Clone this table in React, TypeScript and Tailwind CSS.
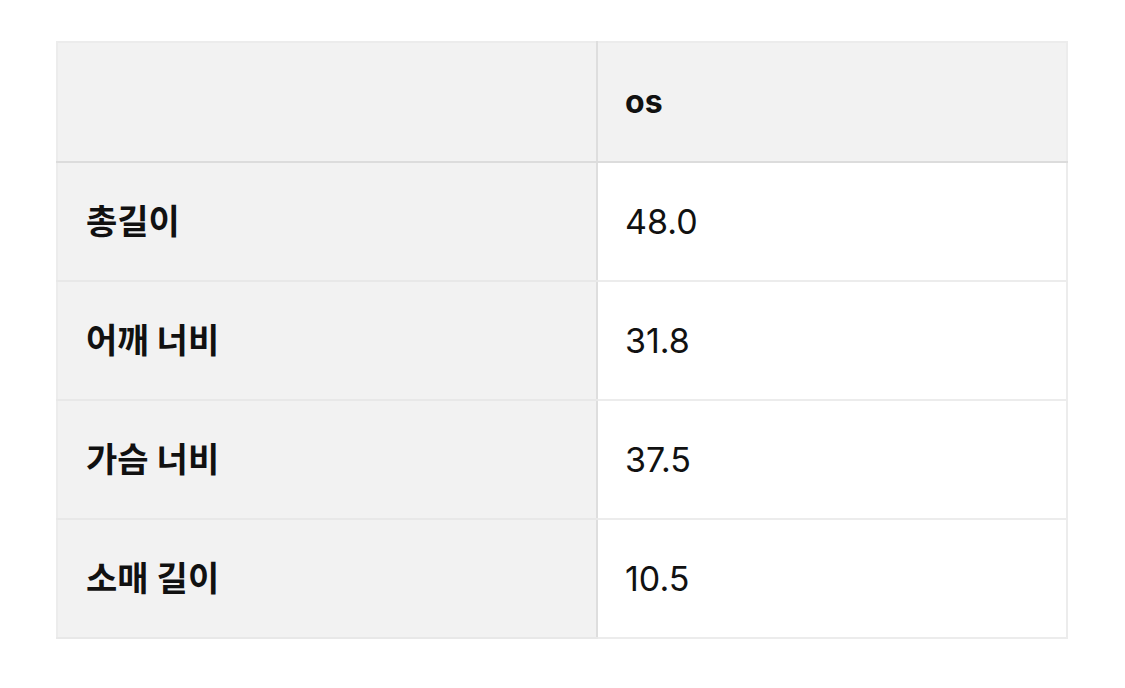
const rows = [
  { label: "총길이", value: "48.0" },
  { label: "어깨 너비", value: "31.8" },
  { label: "가슴 너비", value: "37.5" },
  { label: "소매 길이", value: "10.5" },
];

export default function App() {
  return (
    <div
      className="min-h-[688px] w-[1125px] bg-white pl-[56px] pt-[41px] text-[#111]"
      style={{ fontFamily: 'Inter, "Noto Sans CJK KR", sans-serif' }}
    >
      <table className="w-[1012px] border-collapse border-2 border-[#ececec] text-[34px]">
        <thead>
          <tr className="h-[120px] bg-[#f2f2f2]">
            <th className="w-[540px] border-r-2 border-b-2 border-r-[#dedede] border-b-[#dcdcdc]" />
            <th className="border-b-2 border-[#dcdcdc] pl-[27px] text-left text-[32px] font-bold">os</th>
          </tr>
        </thead>
        <tbody>
          {rows.map((row) => (
            <tr key={row.label} className="h-[119px]">
              <td className="border-r-2 border-b-2 border-r-[#dedede] border-b-[#e8e8e8] bg-[#f2f2f2] pl-[28px] font-bold">
                {row.label}
              </td>
              <td className="border-b-2 border-[#ececec] bg-white pl-[27px]">{row.value}</td>
            </tr>
          ))}
        </tbody>
      </table>
    </div>
  );
}
